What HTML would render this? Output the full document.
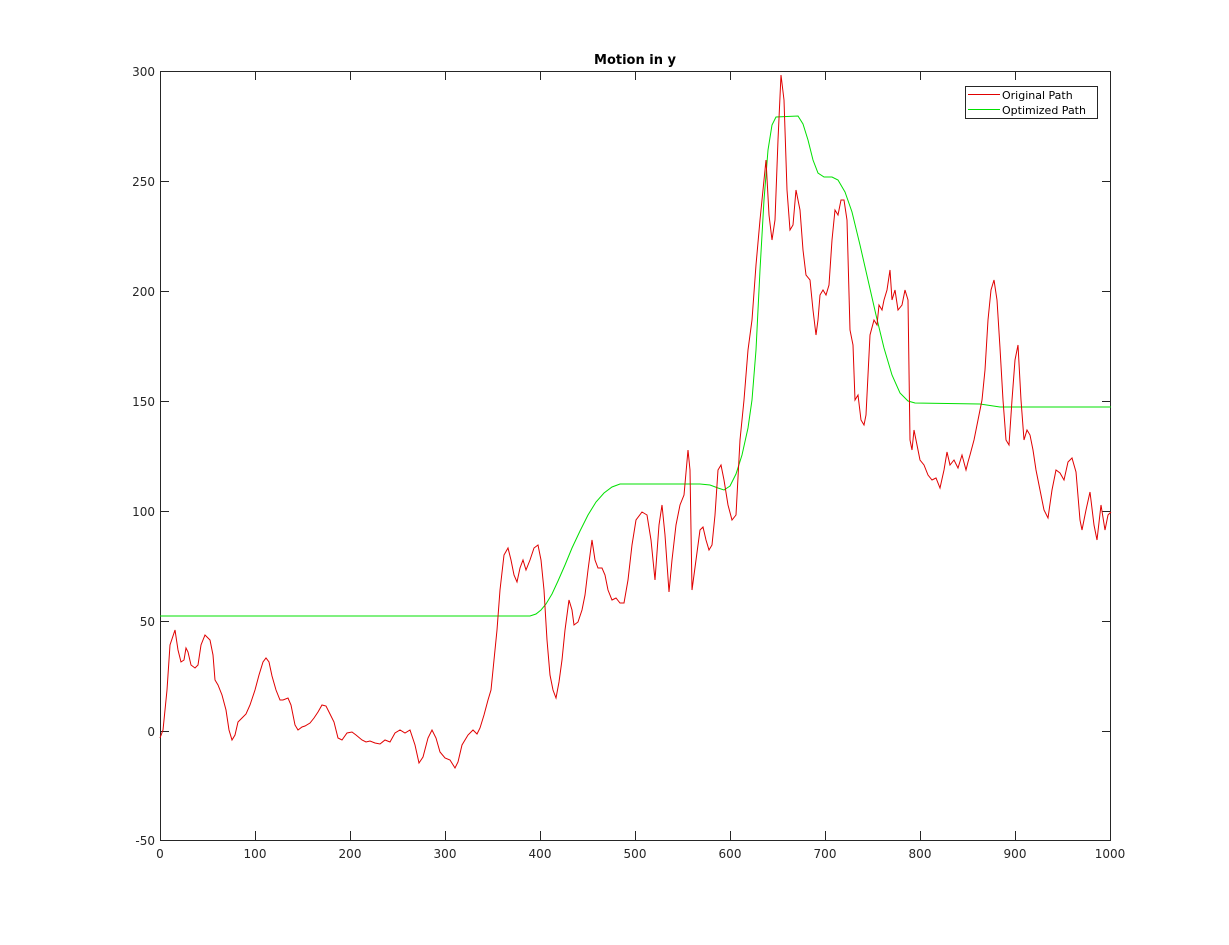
<!DOCTYPE html>
<html><head><meta charset="utf-8"><style>
html,body{margin:0;padding:0;background:#fff;}
svg{display:block;font-family:"DejaVu Sans","Liberation Sans",sans-serif;}
</style></head><body>
<svg width="1229" height="945" viewBox="0 0 1229 945" xmlns="http://www.w3.org/2000/svg">
<rect x="0" y="0" width="1229" height="945" fill="#fff"/>
<text x="635" y="64" font-size="13" font-weight="bold" text-anchor="middle" fill="#000">Motion in y</text>
<rect x="160.5" y="71.5" width="950" height="769" fill="none" stroke="#262626" stroke-width="1"/>
<g stroke="#262626" stroke-width="1">
<path d="M160.5 71v9M255.5 840v-9M255.5 71v9M350.5 840v-9M350.5 71v9M445.5 840v-9M445.5 71v9M540.5 840v-9M540.5 71v9M635.5 840v-9M635.5 71v9M730.5 840v-9M730.5 71v9M825.5 840v-9M825.5 71v9M920.5 840v-9M920.5 71v9M1015.5 840v-9M1015.5 71v9"/>
<path d="M160 181.5h9M1111 181.5h-9M160 291.5h9M1111 291.5h-9M160 401.5h9M1111 401.5h-9M160 511.5h9M1111 511.5h-9M160 621.5h9M1111 621.5h-9M160 731.5h9M1111 731.5h-9"/>
</g>
<g font-size="12" fill="#262626" text-anchor="end">
<text x="155" y="76">300</text><text x="155" y="186">250</text><text x="155" y="296">200</text>
<text x="155" y="406">150</text><text x="155" y="516">100</text><text x="155" y="626">50</text>
<text x="155" y="736">0</text><text x="155" y="845">-50</text>
</g>
<g font-size="12" fill="#262626" text-anchor="middle">
<text x="160" y="858">0</text><text x="255" y="858">100</text><text x="350" y="858">200</text>
<text x="445" y="858">300</text><text x="540" y="858">400</text><text x="635" y="858">500</text>
<text x="730" y="858">600</text><text x="825" y="858">700</text><text x="920" y="858">800</text>
<text x="1015" y="858">900</text><text x="1110" y="858">1000</text>
</g>
<polyline fill="none" stroke="#00e000" stroke-width="1" points="160,616 530,616 536,614 541,610 546,604 552,594 558,581 565,565 572,548 580,531 588,515 596,502 604,493 612,487 620,484 700,484 710,485 718,488 724,490 730,486 736,474 742,455 748,428 752,400 756,350 760,270 764,200 768,150 772,125 776,117 798,116 803,124 808,140 813,160 818,173 824,177 832,177 838,180 845,192 852,212 860,245 868,280 876,315 884,348 892,375 900,393 908,401 915,403 980,404 1000,407 1111,407"/>
<polyline fill="none" stroke="#e00000" stroke-width="1" points="160,738 163,730 167,690 170,645 175,630 178,650 181,662 184,660 186,648 188,652 191,665 195,668 198,665 201,645 205,635 210,640 213,655 215,680 218,685 222,695 226,710 229,730 232,740 235,735 238,722 242,718 246,714 250,705 255,690 259,675 263,662 266,658 269,662 272,676 276,690 280,700 283,700 288,698 291,705 295,725 298,730 302,727 305,726 310,723 314,718 318,712 322,705 326,706 330,714 334,722 338,738 342,740 347,733 352,732 356,735 362,740 366,742 370,741 375,743 380,744 385,740 390,742 395,733 400,730 405,733 410,730 415,745 419,763 423,757 428,738 432,730 436,738 440,752 445,758 450,760 455,768 458,762 462,745 468,735 473,730 477,734 480,728 484,715 488,700 491,690 494,660 497,630 500,590 504,555 508,548 511,560 514,575 517,582 520,568 523,560 526,570 530,560 534,548 538,545 541,560 544,590 547,640 550,675 553,690 556,698 559,682 562,660 565,630 569,600 572,610 574,625 578,622 582,610 585,595 588,570 592,540 595,560 598,568 602,568 605,575 608,590 612,600 616,598 620,603 624,603 628,580 632,545 636,520 642,512 647,515 651,540 655,580 659,525 662,505 665,535 669,592 672,560 676,525 680,505 684,495 688,450 690,470 692,590 696,560 700,530 703,527 706,540 709,550 712,545 715,515 718,470 721,465 724,480 728,505 732,520 736,515 740,440 744,400 748,350 752,320 756,265 760,220 763,190 766,160 769,215 772,240 775,220 778,140 781,75 784,100 787,190 790,230 793,225 796,190 800,210 803,250 806,275 810,280 813,310 816,335 818,320 820,295 823,290 826,295 829,285 832,240 835,210 838,215 841,200 844,200 847,220 850,330 853,345 855,400 858,395 861,420 864,425 866,415 870,335 874,320 877,325 879,305 882,310 884,300 887,290 890,270 892,300 895,290 898,310 902,305 905,290 908,300 910,440 912,450 914,430 917,445 920,460 924,465 928,475 932,480 936,478 940,488 944,470 947,452 950,465 954,460 958,468 962,455 966,470 968,462 970,455 974,440 978,420 982,400 985,370 988,320 991,290 994,280 997,300 1000,348 1003,400 1006,440 1009,445 1012,400 1015,360 1018,345 1021,400 1024,440 1027,430 1030,435 1033,450 1036,470 1040,490 1044,510 1048,518 1052,490 1056,470 1060,473 1064,480 1068,462 1072,458 1076,472 1080,520 1082,530 1086,510 1090,492 1094,525 1097,540 1101,505 1105,530 1108,515 1111,512"/>
<rect x="965.5" y="86.5" width="132" height="32" fill="#fff" stroke="#262626" stroke-width="1"/>
<line x1="968" y1="94.5" x2="1000" y2="94.5" stroke="#e00000"/>
<line x1="968" y1="109.5" x2="1000" y2="109.5" stroke="#00e000"/>
<text x="1002" y="99" font-size="11" fill="#000">Original Path</text>
<text x="1002" y="114" font-size="11" fill="#000">Optimized Path</text>
</svg>
</body></html>
